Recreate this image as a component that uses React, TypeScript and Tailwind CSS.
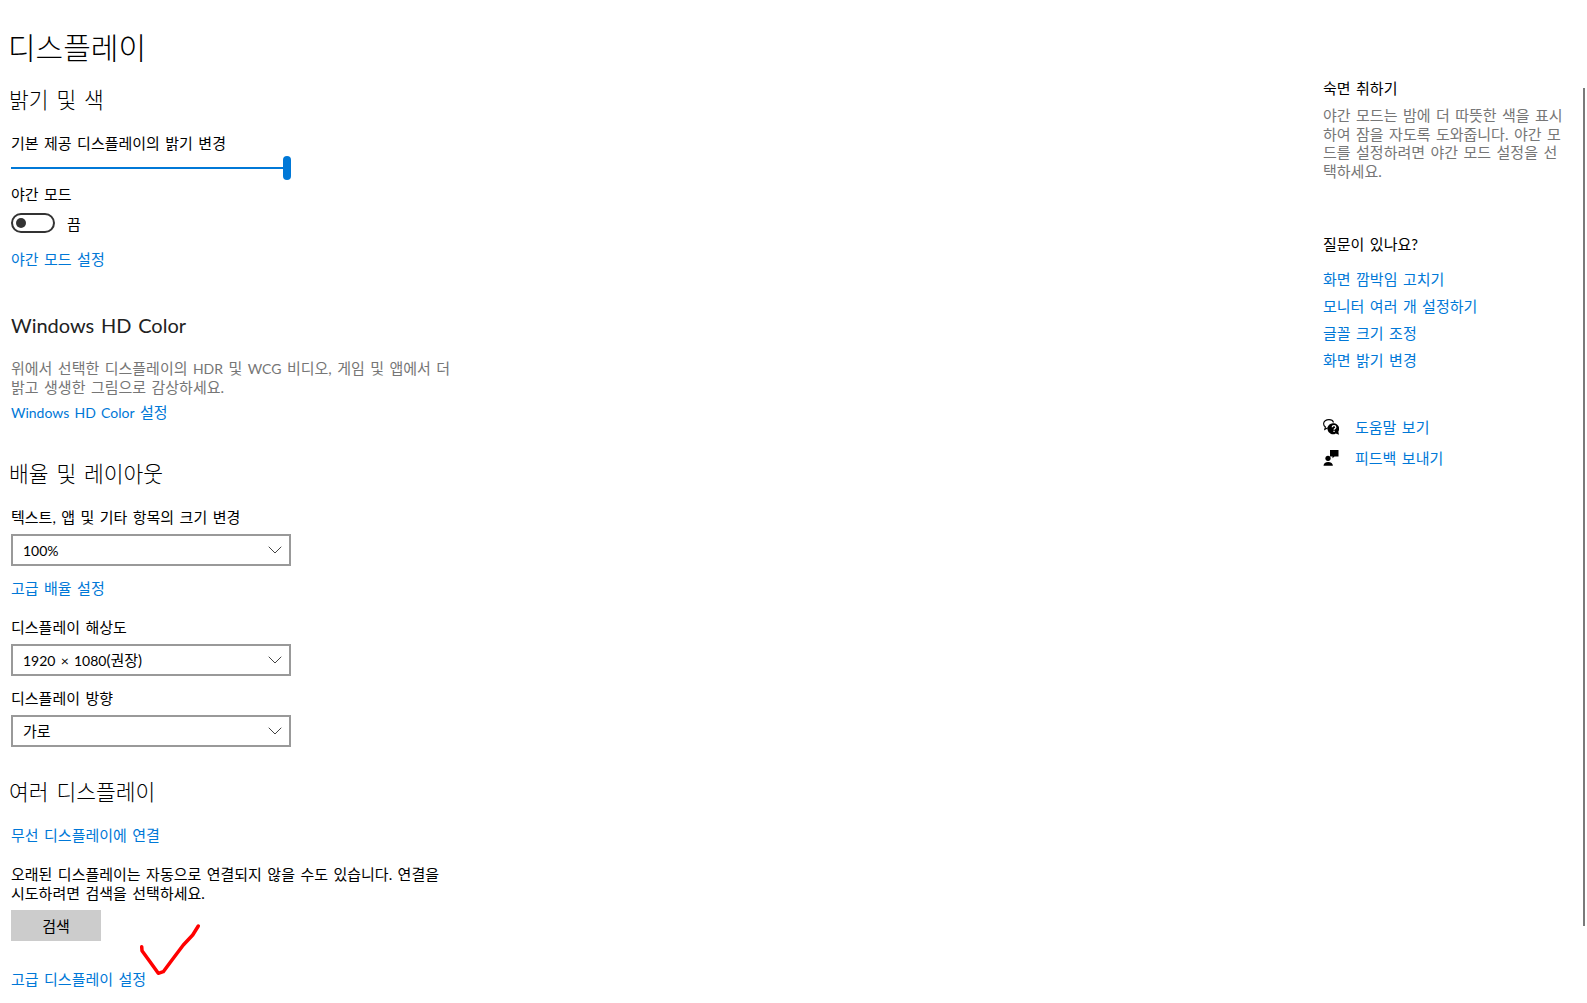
import { ChevronDown } from 'lucide-react';

const FONT = "font-['Lato','Noto_Sans_CJK_KR',sans-serif]";

// 본문 라벨
function Label({ children, className = '' }: { children: React.ReactNode; className?: string }) {
  return <div className={`h-5 text-[15px] leading-5 text-black whitespace-nowrap ${className}`}>{children}</div>;
}

function Link({ children, className = '' }: { children: React.ReactNode; className?: string }) {
  return <div className={`h-5 text-[15px] leading-5 text-[#0078d7] whitespace-nowrap ${className}`}>{children}</div>;
}

function Heading({ children, className = '' }: { children: React.ReactNode; className?: string }) {
  return <h2 className={`h-7 -ml-[2px] text-[21.5px] leading-7 font-light text-black whitespace-nowrap [word-spacing:2px] ${className}`}>{children}</h2>;
}

function Select({ children, className = '' }: { children: React.ReactNode; className?: string }) {
  return (
    <div className={`flex h-8 w-[280px] items-center justify-between border-2 border-[#999999] pl-[10px] pr-[2px] text-[15px] text-black ${className}`}>
      <span>{children}</span>
      <ChevronDown className="h-6 w-6 text-[#444444]" strokeWidth={1} />
    </div>
  );
}

function HelpIcon() {
  return (
    <svg width="16" height="16" viewBox="0 0 16 16" className="shrink-0">
      <path d="M10.5 3.5C10 1.6 8.2.6 6 .6 3 .6.6 2.400.6 4.800c0 1.400.7 2.500 1.800 3.200L1.800 10.500l3-1.700" fill="none" stroke="#000" strokeWidth="1.100" />
      <path d="M11 4.300a5.500 5.500 0 0 1 4.300 8.400l.7 3-3.200-1.300A5.500 5.500 0 1 1 11 4.300z" fill="#000" />
      <path d="M9.200 8.300c0-1 .8-1.600 1.800-1.600s1.800.6 1.800 1.500c0 1.300-1.700 1.300-1.700 2.600" fill="none" stroke="#fff" strokeWidth="1.200" />
      <rect x="10.400" y="11.700" width="1.300" height="1.300" fill="#fff" />
    </svg>
  );
}

function FeedbackIcon() {
  return (
    <svg width="16" height="16" viewBox="0 0 16 16" className="shrink-0">
      <path d="M7 0H15.500v6.500H11.500L9.500 8.300v-1.800H7z" fill="#000" />
      <circle cx="5" cy="8.300" r="2.600" fill="#000" />
      <path d="M0.500 15.800c0-2.600 2-3.900 4.700-3.900s4.700 1.300 4.700 3.900z" fill="#000" />
    </svg>
  );
}

export default function App() {
  return (
    <div className={`relative flex h-[1003px] w-full justify-between overflow-hidden bg-white [word-spacing:1.6px] ${FONT}`}>
      <main className="w-[600px] pl-[11px] pt-[27px]">
        <h1 className="h-10 -ml-[3px] text-[30px] leading-10 font-light text-black whitespace-nowrap">디스플레이</h1>

        <Heading className="mt-[19px]">밝기 및 색</Heading>
        <Label className="mt-[19px]">기본 제공 디스플레이의 밝기 변경</Label>
        <div className="mt-[3px] flex h-6 w-[280px] items-center">
          <div className="h-0.5 flex-1 bg-[#0078d7]" />
          <div className="h-6 w-2 rounded-full bg-[#0078d7]" />
        </div>
        <Label className="mt-1">야간 모드</Label>
        <div className="mt-[9px] flex h-5 items-center">
          <div className="flex h-5 w-11 items-center rounded-full border-2 border-[#333333] pl-[3px]">
            <div className="h-[10px] w-[10px] rounded-full bg-[#333333]" />
          </div>
          <span className="ml-3 mt-[2px] text-[15px] text-black">끔</span>
        </div>
        <Link className="mt-4">야간 모드 설정</Link>

        <h2 className="mt-[42px] h-7 text-[20px] leading-7 text-[#222222] whitespace-nowrap">Windows HD Color</h2>
        <p className="mt-5 w-[445px] text-[15px] leading-[19px] text-[#767676] whitespace-nowrap">
          <span className="block">
            위에서 선택한 디스플레이의 <span className="text-[14px]">HDR</span> 및 <span className="text-[14px]">WCG</span> 비디오, 게임 및 앱에서 더
          </span>
          <span className="block">밝고 생생한 그림으로 감상하세요.</span>
        </p>
        <Link className="mt-[5px]"><span className="text-[14px]">Windows HD Color</span> 설정</Link>

        <Heading className="mt-[38px]">배율 및 레이아웃</Heading>
        <Label className="mt-[19px]">텍스트, 앱 및 기타 항목의 크기 변경</Label>
        <Select className="mt-[7px]"><span className="text-[14px]">100%</span></Select>
        <Link className="mt-3">고급 배율 설정</Link>
        <Label className="mt-[19px]">디스플레이 해상도</Label>
        <Select className="mt-[7px]"><span className="text-[14px]">1920 × 1080</span>(권장)</Select>
        <Label className="mt-3">디스플레이 방향</Label>
        <Select className="mt-[7px]">가로</Select>

        <Heading className="mt-[31px]">여러 디스플레이</Heading>
        <Link className="mt-[19px]">무선 디스플레이에 연결</Link>
        <p className="mt-5 w-[445px] text-[15px] leading-[19px] text-black">
          오래된 디스플레이는 자동으로 연결되지 않을 수도 있습니다. 연결을 시도하려면 검색을 선택하세요.
        </p>
        <button className="mt-[7px] block h-[31px] w-[90px] bg-[#cccccc] pt-px text-[15px] text-black">검색</button>
        <Link className="mt-7">고급 디스플레이 설정</Link>
      </main>

      <aside className="w-[264px] pt-[78px]">
        <Label>숙면 취하기</Label>
        <p className="mt-2 h-[74px] w-[245px] text-[15px] leading-[18.6px] text-[#767676]">
          야간 모드는 밤에 더 따뜻한 색을 표시하여 잠을 자도록 도와줍니다. 야간 모드를 설정하려면 야간 모드 설정을 선택하세요.
        </p>
        <Label className="mt-[54px]">질문이 있나요?</Label>
        <div className="mt-[15px] flex flex-col gap-[7px]">
          <Link>화면 깜박임 고치기</Link>
          <Link>모니터 여러 개 설정하기</Link>
          <Link>글꼴 크기 조정</Link>
          <Link>화면 밝기 변경</Link>
        </div>
        <div className="mt-[47px] flex items-center gap-4">
          <HelpIcon />
          <Link>도움말 보기</Link>
        </div>
        <div className="mt-[11px] flex items-center gap-4">
          <FeedbackIcon />
          <Link>피드백 보내기</Link>
        </div>
      </aside>

      {/* 스크롤바 */}
      <div className="absolute left-[1583px] top-[88px] h-[838px] w-[2px] bg-[#7a7a7a]" />

      {/* 빨간 체크 표시 */}
      <svg className="absolute left-[130px] top-[915px]" width="80" height="70" viewBox="130 915 80 70" fill="none">
        <path
          d="M141.7 946.7L142 950.7L150 961.7L158.3 973.3L163.3 971.7L170.7 961.7L183.3 945L192.7 935L198.3 926"
          stroke="#ff0000"
          strokeWidth="3.5"
          strokeLinecap="round"
          strokeLinejoin="round"
        />
      </svg>
    </div>
  );
}
